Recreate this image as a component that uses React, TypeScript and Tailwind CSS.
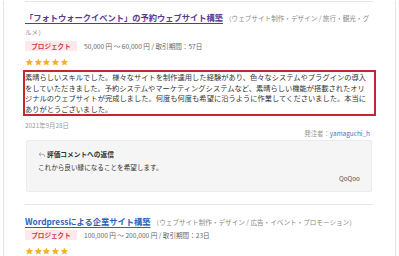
import React from "react";

const Stars = () => (
  <div className="flex h-[8px] items-center">
    {[0, 1, 2, 3, 4].map((i) => (
      <svg key={i} width="8.7" height="8.5" viewBox="0 0 24 24" className="shrink-0">
        <polygon
          points="12,1.5 15.1,8.3 22.5,9.1 17,14.1 18.5,21.5 12,17.8 5.5,21.5 7,14.1 1.5,9.1 8.9,8.3"
          fill="#f0b323"
        />
      </svg>
    ))}
  </div>
);

const Badge = () => (
  <span className="inline-flex h-[10px] w-[52px] items-center justify-center bg-[#fde8ec] text-[6.6px] font-bold leading-[10px] text-[#d0384a]">
    プロジェクト
  </span>
);

export default function App() {
  const font = { fontFamily: '"Noto Sans CJK JP", "Noto Sans", sans-serif' };
  return (
    <div className="h-[256px] w-[399px] overflow-hidden bg-white text-[7px] leading-[10px]" style={font}>
      <div className="mx-[3px] h-full border-x border-[#e3e3e3] pl-[21px] pr-[22px]">
        {/* item 1 */}
        <div className="mt-[1px] border-t border-[#e6e6e6] pt-[9px]">
          <div className="text-[8.25px] leading-[13px]">
            <span className="font-bold text-[#5b3a91] underline underline-offset-[1.5px]">
              「フォトウォークイベント」の予約ウェブサイト構築
            </span>
            <span className="ml-[2px] text-[6.6px] text-[#8a8a8a]">
              （ウェブサイト制作・デザイン / 旅行・観光・グルメ）
            </span>
          </div>
          <div className="mt-[2px] flex items-center">
            <Badge />
            <span className="ml-[7px] text-[6.6px] leading-[10px] text-[#666]">
              50,000 円 〜 60,000 円 / 取引期間：57日
            </span>
          </div>
          <div className="mt-[7px]">
            <Stars />
          </div>
          <div className="-ml-[2px] mt-[4px] w-[353px] border-2 border-[#c8262e] text-[7.27px] leading-[10.5px] text-[#333]">
            <div className="whitespace-nowrap">素晴らしいスキルでした。様々なサイトを制作達用した経験があり、色々なシステムやプラグインの導入</div>
            <div className="whitespace-nowrap">をしていただきました。予約システムやマーケティングシステムなど、素晴らしい機能が搭載されたオリ</div>
            <div className="whitespace-nowrap">ジナルのウェブサイトが完成しました。何度も何度も希望に沿うように作業してくださいました。本当に</div>
            <div className="whitespace-nowrap">ありがとうございました。</div>
          </div>
          <div className="mt-[5px] text-[6.4px] leading-[9px] text-[#999]">2021年9月28日</div>
          <div className="-mt-[1px] pr-[3px] text-right text-[6.4px] leading-[9px] text-[#999]">
            発注者：<span className="text-[#3b78c4]">yamaguchi_h</span>
          </div>
          <div className="ml-[1px] mr-[1px] mt-[2px] h-[52px] rounded-[2px] border border-[#ebebeb] bg-[#f5f5f5] pl-[11px] pr-[11px] pt-[8px]">
            <div className="flex items-center text-[6.7px] font-bold leading-[10px] text-[#333]">
              <svg width="8" height="7" viewBox="0 0 24 20" className="mr-[1px]">
                <path d="M9 4 L3 9.5 L9 15" fill="none" stroke="#999" strokeWidth="2.4" />
                <path d="M3.5 9.5 H14 a6 6 0 0 1 6 6 V18" fill="none" stroke="#999" strokeWidth="2.4" />
              </svg>
              評価コメントへの返信
            </div>
            <div className="mt-[3px] text-[6.6px] leading-[10px] text-[#333]">これから良い縁になることを希望します。</div>
            <div className="mt-[2px] text-right text-[6.4px] leading-[9px] text-[#555]">QoQoo</div>
          </div>
        </div>
        {/* item 2 */}
        <div className="mt-[12px] border-t border-[#e6e6e6] pt-[10px]">
          <div className="text-[8.25px] leading-[13px]">
            <span className="font-bold text-[#2a62b8] underline underline-offset-[1.5px]">
              Wordpressによる企業サイト構築
            </span>
            <span className="ml-[2px] text-[6.6px] text-[#8a8a8a]">
              （ウェブサイト制作・デザイン / 広告・イベント・プロモーション）
            </span>
          </div>
          <div className="mt-[1px] flex items-center">
            <Badge />
            <span className="ml-[7px] text-[6.6px] leading-[10px] text-[#666]">
              100,000 円 〜 200,000 円 / 取引期間：23日
            </span>
          </div>
          <div className="mt-[7px]">
            <Stars />
          </div>
        </div>
      </div>
    </div>
  );
}
